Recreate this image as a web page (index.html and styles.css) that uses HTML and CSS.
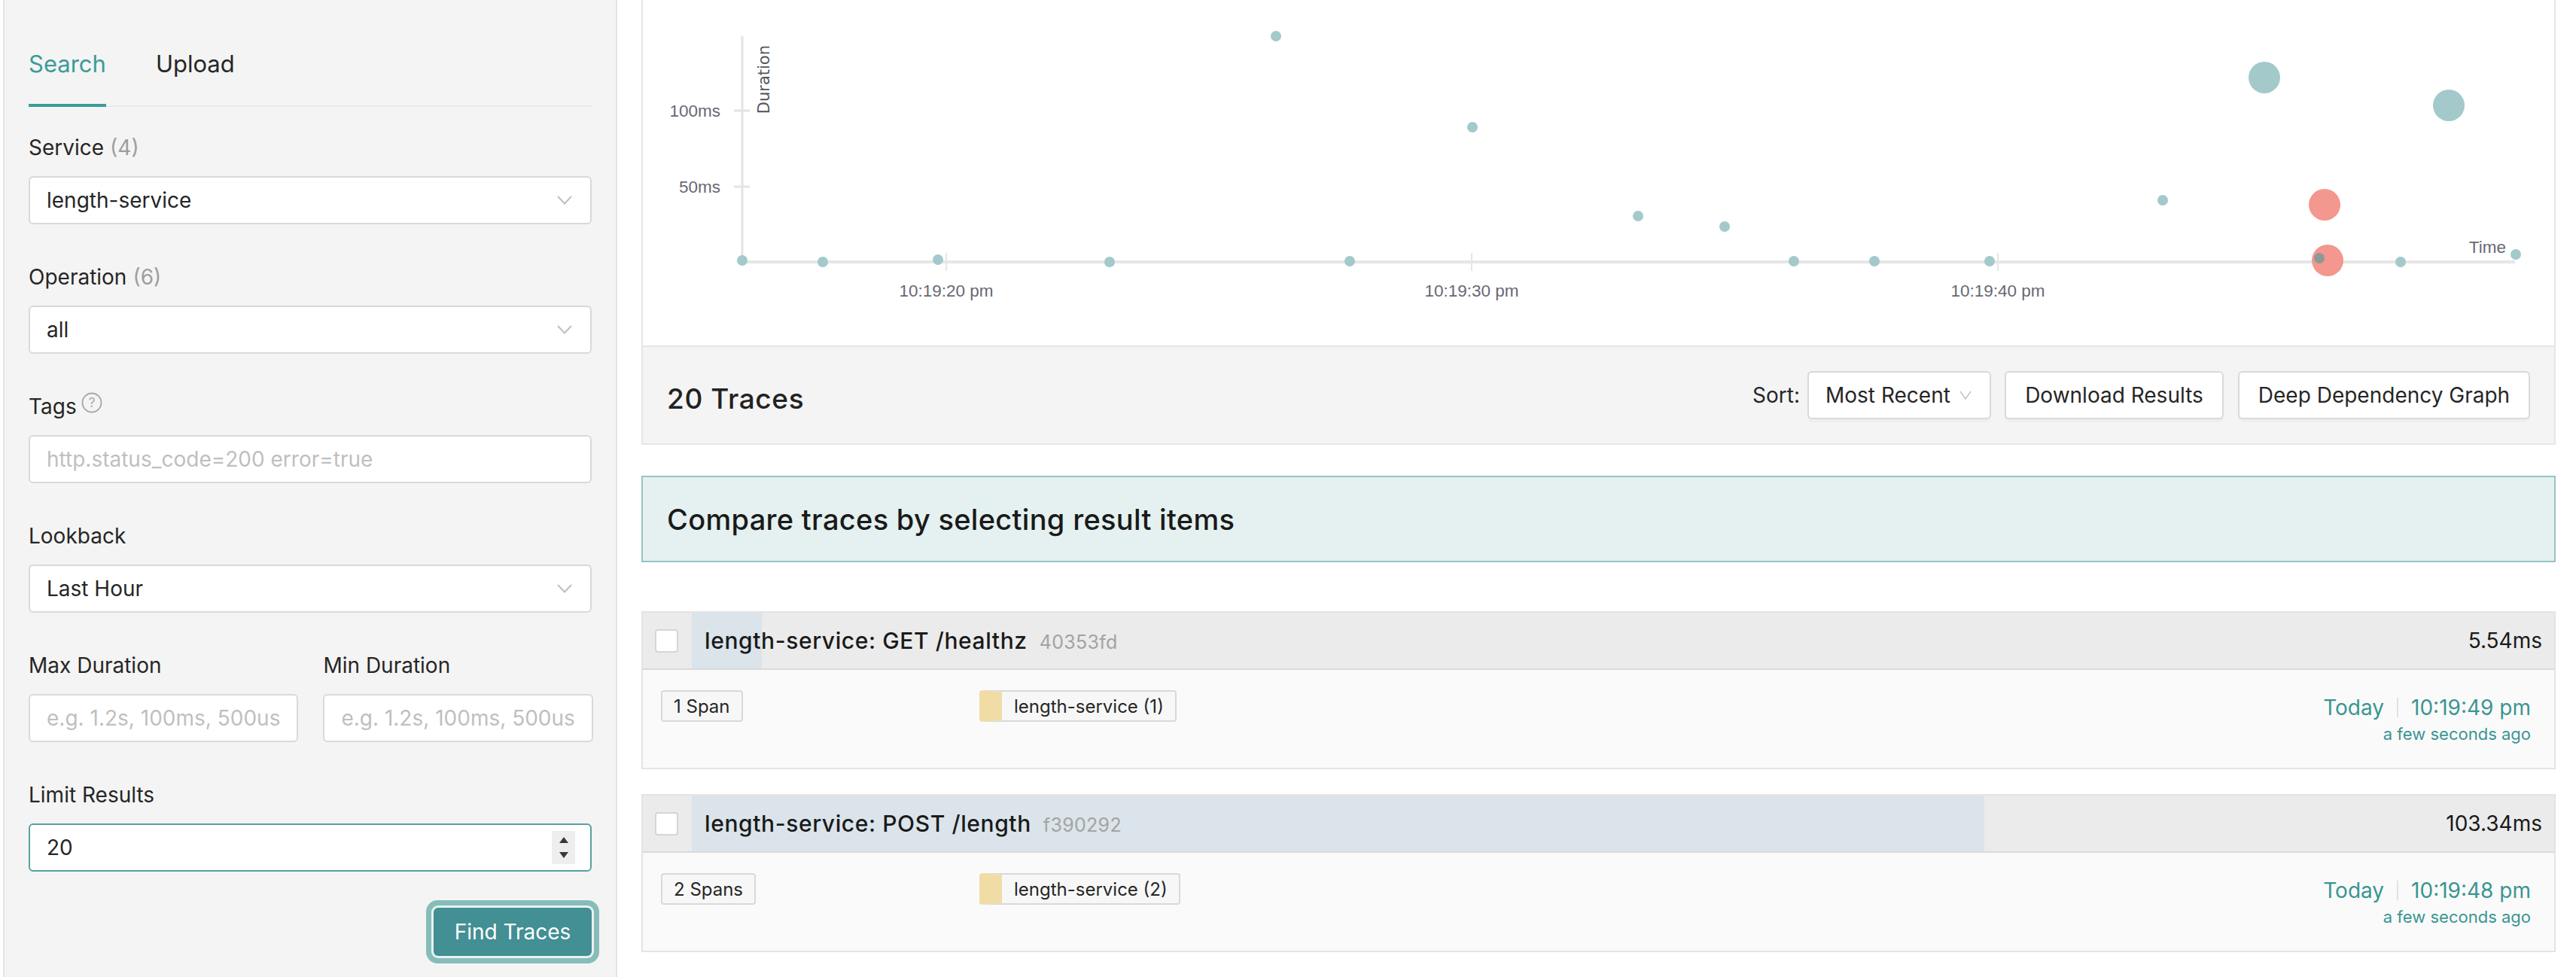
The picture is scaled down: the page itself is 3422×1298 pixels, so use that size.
FILE: index.html
```html
<!DOCTYPE html>
<html lang="en">
<head>
<meta charset="utf-8">
<title>Jaeger UI - Search</title>
<link rel="stylesheet" href="styles.css">
</head>
<body>
<div class="page">
  <aside class="sidebar">
    <div class="tabs">
      <div class="tab active">Search</div>
      <div class="tab">Upload</div>
    </div>
    <form class="search-form">
      <div class="field">
        <div class="label">Service <span class="count">(4)</span></div>
        <div class="input select"><span class="value">length-service</span><svg class="chev" width="20" height="12" viewBox="0 0 20 12"><path d="M1 1 L10 10.5 L19 1" fill="none" stroke="#bfbfbf" stroke-width="2"/></svg></div>
      </div>
      <div class="field">
        <div class="label">Operation <span class="count">(6)</span></div>
        <div class="input select"><span class="value">all</span><svg class="chev" width="20" height="12" viewBox="0 0 20 12"><path d="M1 1 L10 10.5 L19 1" fill="none" stroke="#bfbfbf" stroke-width="2"/></svg></div>
      </div>
      <div class="field">
        <div class="label">Tags <svg class="help" width="28" height="28" viewBox="0 0 28 28"><circle cx="14" cy="14" r="12.5" fill="none" stroke="#a6a6a6" stroke-width="1.8"/><text x="14" y="20" text-anchor="middle" font-size="17" fill="#a6a6a6" font-family="Inter, sans-serif">?</text></svg></div>
        <div class="input"><span class="placeholder">http.status_code=200 error=true</span></div>
      </div>
      <div class="field">
        <div class="label">Lookback</div>
        <div class="input select"><span class="value">Last Hour</span><svg class="chev" width="20" height="12" viewBox="0 0 20 12"><path d="M1 1 L10 10.5 L19 1" fill="none" stroke="#bfbfbf" stroke-width="2"/></svg></div>
      </div>
      <div class="field two">
        <div class="col">
          <div class="label">Max Duration</div>
          <div class="input"><span class="placeholder">e.g. 1.2s, 100ms, 500us</span></div>
        </div>
        <div class="col">
          <div class="label">Min Duration</div>
          <div class="input"><span class="placeholder">e.g. 1.2s, 100ms, 500us</span></div>
        </div>
      </div>
      <div class="field">
        <div class="label">Limit Results</div>
        <div class="input focused"><span class="value">20</span><span class="spinner"><span class="up"></span><span class="down"></span></span></div>
      </div>
      <div class="actions">
        <div class="find-btn">Find Traces</div>
      </div>
    </form>
  </aside>

  <main class="main">
    <section class="chart-panel">
      <svg class="chart" width="2539" height="459" viewBox="0 0 2539 459">
        <line x1="132" y1="48" x2="132" y2="348" stroke="#e3e3e3" stroke-width="3"/>
        <line x1="121" y1="147" x2="142" y2="147" stroke="#e3e3e3" stroke-width="3"/>
        <line x1="121" y1="248" x2="142" y2="248" stroke="#e3e3e3" stroke-width="3"/>
        <line x1="132" y1="348" x2="2487" y2="348" stroke="#e6e6e6" stroke-width="4"/>
        <line x1="403" y1="336" x2="403" y2="360" stroke="#e6e6e6" stroke-width="2"/>
        <line x1="1101" y1="336" x2="1101" y2="360" stroke="#e6e6e6" stroke-width="2"/>
        <line x1="1800" y1="336" x2="1800" y2="360" stroke="#e6e6e6" stroke-width="2"/>
        <g class="axis-text">
          <text x="103" y="155" text-anchor="end">100ms</text>
          <text x="103" y="256" text-anchor="end">50ms</text>
          <text x="403" y="394" text-anchor="middle">10:19:20 pm</text>
          <text x="1101" y="394" text-anchor="middle">10:19:30 pm</text>
          <text x="1800" y="394" text-anchor="middle">10:19:40 pm</text>
          <text x="2475" y="336" text-anchor="end">Time</text>
        </g>
        <text class="axis-title" transform="translate(168,60) rotate(-90)" text-anchor="end">Duration</text>
        <g fill="#a3c9cb">
          <circle cx="132" cy="346" r="7"/>
          <circle cx="239" cy="348" r="7"/>
          <circle cx="392" cy="345" r="7"/>
          <circle cx="620" cy="348" r="7"/>
          <circle cx="841" cy="48" r="7"/>
          <circle cx="939" cy="347" r="7"/>
          <circle cx="1102" cy="169" r="7"/>
          <circle cx="1322" cy="287" r="7"/>
          <circle cx="1437" cy="301" r="7"/>
          <circle cx="1529" cy="347" r="7"/>
          <circle cx="1636" cy="347" r="7"/>
          <circle cx="1789" cy="347" r="7"/>
          <circle cx="2019" cy="266" r="7"/>
          <circle cx="2335" cy="348" r="7"/>
          <circle cx="2488" cy="338" r="7"/>
          <circle cx="2154" cy="103" r="21"/>
          <circle cx="2399" cy="140" r="21"/>
        </g>
        <g fill="#f3978f">
          <circle cx="2234" cy="272" r="21"/>
          <circle cx="2238" cy="346" r="21"/>
        </g>
        <circle cx="2227" cy="343" r="7" fill="#8d9999"/>
      </svg>
    </section>

    <section class="results-header">
      <div class="results-title">20 Traces</div>
      <div class="results-controls">
        <span class="sort-label">Sort:</span>
        <div class="btn sort-select"><span>Most Recent</span><svg width="16" height="12" viewBox="0 0 16 12"><path d="M1 1 L8 11 L15 1" fill="none" stroke="#c4c4c4" stroke-width="1.6"/></svg></div>
        <div class="btn download">Download Results</div>
        <div class="btn ddg">Deep Dependency Graph</div>
      </div>
    </section>

    <div class="alert">Compare traces by selecting result items</div>

    <div class="trace">
      <div class="trace-head">
        <div class="check-col"><span class="checkbox"></span></div>
        <div class="title-area">
          <span class="bar" style="width:3.76%"></span>
          <span class="title">length-service: GET /healthz<span class="trace-id">40353fd</span></span>
          <span class="duration">5.54ms</span>
        </div>
      </div>
      <div class="trace-body">
        <div class="span-col"><span class="tag">1 Span</span></div>
        <div class="svc-col"><span class="tag svc">length-service (1)</span></div>
        <div class="time-col">
          <div class="time-main">Today<span class="sep"></span>10:19:49 pm</div>
          <div class="time-ago">a few seconds ago</div>
        </div>
      </div>
    </div>

    <div class="trace">
      <div class="trace-head">
        <div class="check-col"><span class="checkbox"></span></div>
        <div class="title-area">
          <span class="bar" style="width:69.4%"></span>
          <span class="title">length-service: POST /length<span class="trace-id">f390292</span></span>
          <span class="duration">103.34ms</span>
        </div>
      </div>
      <div class="trace-body">
        <div class="span-col"><span class="tag">2 Spans</span></div>
        <div class="svc-col"><span class="tag svc">length-service (2)</span></div>
        <div class="time-col">
          <div class="time-main">Today<span class="sep"></span>10:19:48 pm</div>
          <div class="time-ago">a few seconds ago</div>
        </div>
      </div>
    </div>

    <div class="trace trace-next"></div>
  </main>
</div>
</body>
</html>
```

FILE: styles.css
```css
html, body {
  margin: 0;
  padding: 0;
  background: #ffffff;
}

body {
  width: 3422px;
  height: 1298px;
  overflow: hidden;
  font-family: Inter, "Noto Sans", "Liberation Sans", sans-serif;
  color: #262626;
}

.page {
  display: flex;
  align-items: flex-start;
  height: 1298px;
  overflow: hidden;
}

/* ---------- Sidebar ---------- */
.sidebar {
  box-sizing: border-box;
  margin-left: 4px;
  width: 816px;
  height: 1298px;
  padding: 0 32px;
  background: #f4f4f4;
  border-left: 2px solid #e4e4e4;
  border-right: 2px solid #e4e4e4;
  flex: none;
}

.tabs {
  display: flex;
  gap: 66px;
  height: 142px;
  box-sizing: border-box;
  border-bottom: 2px solid #e9e9e9;
}

.tab {
  position: relative;
  font-size: 31px;
  line-height: 48px;
  padding-top: 61px;
  height: 138px;
  box-sizing: border-box;
  color: #262626;
}

.tab.active {
  color: #3d9b98;
}

.tab.active::after {
  content: "";
  position: absolute;
  left: 0;
  right: 0;
  bottom: -4px;
  height: 4px;
  background: #3d9b98;
}

.search-form {
  margin-top: 32px;
}

.field {
  margin-bottom: 48px;
}

.field.two {
  display: grid;
  grid-template-columns: 1fr 1fr;
  column-gap: 33px;
}

.label {
  font-size: 28px;
  line-height: 44px;
  padding-bottom: 16px;
  color: #262626;
  display: flex;
  align-items: center;
}

.label .count {
  color: #9e9e9e;
  margin-left: 8px;
}

.help {
  margin-left: 6px;
  position: relative;
  top: -5px;
}

.input {
  box-sizing: border-box;
  height: 64px;
  background: #ffffff;
  border: 2px solid #d9d9d9;
  border-radius: 6px;
  padding: 0 22px;
  display: flex;
  align-items: center;
  font-size: 28px;
  color: #262626;
}

.input .value {
  flex: 1;
}

.input .placeholder {
  color: #bfbfbf;
  white-space: nowrap;
}

.input .chev {
  flex: none;
  margin-right: 2px;
}

.input.focused {
  border-color: #55a3a0;
  padding-right: 20px;
}

.spinner {
  flex: none;
  width: 31px;
  height: 44px;
  background: #eeeeee;
  display: flex;
  flex-direction: column;
  align-items: center;
  justify-content: center;
  gap: 12px;
}

.spinner .up {
  width: 0;
  height: 0;
  border-left: 6px solid transparent;
  border-right: 6px solid transparent;
  border-bottom: 8px solid #3a3a3a;
}

.spinner .down {
  width: 0;
  height: 0;
  border-left: 6px solid transparent;
  border-right: 6px solid transparent;
  border-top: 8px solid #3a3a3a;
}

.actions {
  display: flex;
  justify-content: flex-end;
}

.find-btn {
  box-sizing: border-box;
  width: 210px;
  height: 64px;
  border-radius: 6px;
  background: #428f94;
  color: #ffffff;
  font-size: 28px;
  display: flex;
  align-items: center;
  justify-content: center;
  box-shadow: 0 0 0 3px #eaf1f0, 0 0 0 10px #86bdb9;
}

/* ---------- Main ---------- */
.main {
  margin-left: 32px;
  width: 2543px;
  flex: none;
  display: flex;
  flex-direction: column;
}

.chart-panel {
  box-sizing: border-box;
  height: 461px;
  background: #ffffff;
  border-left: 2px solid #e6e6e6;
  border-right: 2px solid #e6e6e6;
  border-bottom: 2px solid #e6e6e6;
}

.chart {
  display: block;
}

.axis-text text {
  font-family: "Liberation Sans", Arial, sans-serif;
  font-size: 22.5px;
  fill: #686874;
}

.axis-title {
  font-family: "DejaVu Sans", sans-serif;
  font-size: 21px;
  fill: #55555f;
}

.results-header {
  box-sizing: border-box;
  height: 130px;
  background: #f4f4f4;
  border-left: 2px solid #e6e6e6;
  border-right: 2px solid #e6e6e6;
  border-bottom: 2px solid #e6e6e6;
  padding: 0 32px;
  display: flex;
  align-items: center;
  justify-content: space-between;
}

.results-title {
  font-size: 37px;
  font-weight: 500;
  letter-spacing: 0.6px;
  color: #222222;
  padding-top: 8px;
}

.results-controls {
  display: flex;
  align-items: center;
}

.sort-label {
  font-size: 28px;
  color: #262626;
  margin-right: 10px;
}

.btn {
  box-sizing: border-box;
  height: 64px;
  background: #ffffff;
  border: 2px solid #d9d9d9;
  border-radius: 6px;
  font-size: 28px;
  color: #262626;
  display: flex;
  align-items: center;
  justify-content: center;
  box-shadow: 0 4px 0 rgba(0, 0, 0, 0.025);
}

.sort-select {
  width: 244px;
  justify-content: space-between;
  padding: 0 24px 0 22px;
}

.download {
  width: 291px;
  margin-left: 18px;
}

.ddg {
  width: 388px;
  margin-left: 19px;
}

.alert {
  box-sizing: border-box;
  margin-top: 41px;
  height: 115px;
  background: #e5f1f0;
  border: 2px solid #94c5c2;
  padding: 0 32px;
  display: flex;
  align-items: center;
  font-size: 38px;
  font-weight: 500;
  letter-spacing: 0.3px;
  color: #1a1a1a;
}

.trace {
  box-sizing: border-box;
  margin-top: 65px;
  height: 210px;
  border: 2px solid #e4e4e4;
  background: #fafafa;
  flex: none;
}

.trace + .trace {
  margin-top: 33px;
}

.trace-next {
  background: #ffffff;
}

.trace-head {
  box-sizing: border-box;
  height: 76px;
  display: flex;
  background: #ebebeb;
  border-bottom: 2px solid #dadada;
}

.check-col {
  width: 65px;
  flex: none;
  display: flex;
  align-items: center;
  padding-left: 16px;
  box-sizing: border-box;
}

.checkbox {
  box-sizing: border-box;
  width: 31px;
  height: 31px;
  background: #ffffff;
  border: 2px solid #d6d6d6;
  border-radius: 4px;
}

.title-area {
  position: relative;
  flex: 1;
  display: flex;
  align-items: center;
  justify-content: space-between;
  padding: 0 16px 0 17px;
}

.bar {
  position: absolute;
  left: 0;
  top: 0;
  bottom: 0;
  background: #dae4ea;
}

.title {
  position: relative;
  font-size: 30px;
  font-weight: 500;
  letter-spacing: 0.6px;
  color: #1a1a1a;
  white-space: nowrap;
}

.trace-id {
  font-size: 25px;
  font-weight: 400;
  letter-spacing: 0.3px;
  color: #a3a3a3;
  margin-left: 16px;
}

.duration {
  position: relative;
  font-size: 28px;
  color: #1a1a1a;
}

.trace-body {
  box-sizing: border-box;
  height: 130px;
  display: flex;
  align-items: flex-start;
  padding: 27px 31px 0 24px;
}

.span-col {
  width: 423px;
  flex: none;
}

.svc-col {
  flex: 1;
}

.tag {
  box-sizing: border-box;
  display: inline-flex;
  align-items: center;
  height: 42px;
  padding: 0 15px;
  border: 2px solid #d9d9d9;
  border-radius: 4px;
  background: #f7f7f7;
  font-size: 24px;
  color: #262626;
}

.tag.svc {
  border-left: 30px solid #f1dca6;
  padding-left: 16px;
}

.time-col {
  text-align: right;
  color: #3a9592;
  margin-top: 3px;
}

.time-main {
  font-size: 28px;
  line-height: 40px;
  display: flex;
  align-items: center;
  justify-content: flex-end;
}

.sep {
  display: inline-block;
  width: 2px;
  height: 26px;
  background: #e2e2e2;
  margin: 0 17px;
}

.time-ago {
  font-size: 22px;
  line-height: 30px;
}
```
